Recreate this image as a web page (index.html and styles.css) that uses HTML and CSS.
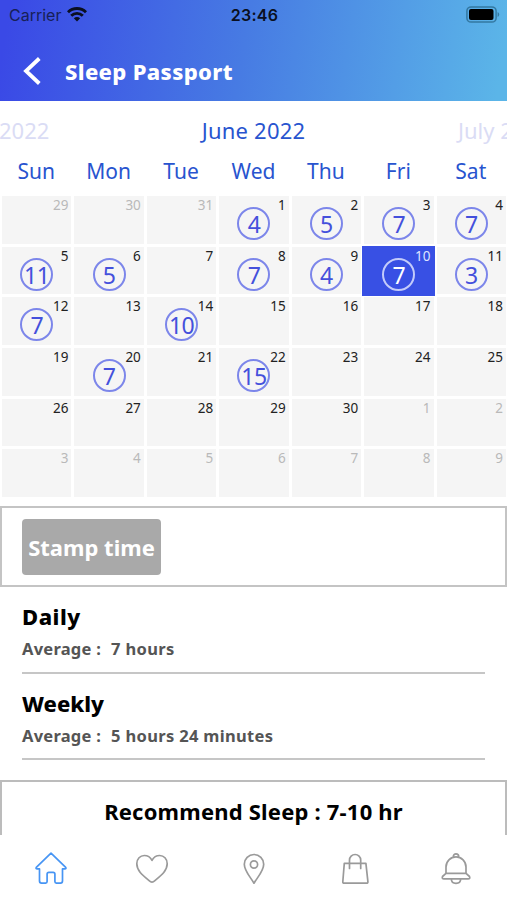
FILE: index.html
```html
<!DOCTYPE html>
<html lang="en">
<head>
<meta charset="utf-8">
<title>Sleep Passport</title>
<link rel="stylesheet" href="styles.css">
</head>
<body>
<div class="app">
  <header class="header">
    <div class="status">
      <div class="carrier"><span>Carrier</span>
        <svg width="20" height="15" viewBox="0 0 20 15" fill="none" stroke="#0a0f20" stroke-width="2.9"><path d="M1 5.2C6 .3 14 .3 19 5.2M4.2 8.800c3.3-3.2 8.3-3.2 11.6 0"/><path d="M6.800 11.200c1.900-1.700 4.500-1.700 6.400 0L10 14.500z" fill="#0a0f20" stroke="none"/></svg>
      </div>
      <time class="clock">23:46</time>
      <svg class="battery" width="34" height="17" viewBox="0 0 34 17"><rect x=".9" y=".9" width="29.2" height="15.2" rx="4.200" fill="none" stroke="#27658a" stroke-opacity=".75" stroke-width="1.5"/><rect x="3" y="3" width="24.5" height="11" rx="2" fill="#000"/><path d="M31.600 6v5q1.600-.7 1.600-2.500T31.600 6" fill="#27658a" fill-opacity=".75"/></svg>
    </div>
    <div class="titlebar">
      <svg width="18" height="28" viewBox="0 0 18 28" fill="none" stroke="#fff" stroke-width="3.800"><path d="M16.300 1.500 3 14l13.300 12.500"/></svg>
      <h1>Sleep Passport</h1>
    </div>
  </header>

  <section class="calendar">
    <div class="months"><span class="prev">2022</span><span class="current">June 2022</span><span class="next">July 2022</span></div>
    <div class="weekdays"><span>Sun</span><span>Mon</span><span>Tue</span><span>Wed</span><span>Thu</span><span>Fri</span><span>Sat</span></div>
    <div class="days">
      <div class="day out"><i>29</i></div><div class="day out"><i>30</i></div><div class="day out"><i>31</i></div><div class="day"><i>1</i><b>4</b></div><div class="day"><i>2</i><b>5</b></div><div class="day"><i>3</i><b>7</b></div><div class="day"><i>4</i><b>7</b></div>
      <div class="day"><i>5</i><b>11</b></div><div class="day"><i>6</i><b>5</b></div><div class="day"><i>7</i></div><div class="day"><i>8</i><b>7</b></div><div class="day"><i>9</i><b>4</b></div><div class="day selected"><i>10</i><b>7</b></div><div class="day"><i>11</i><b>3</b></div>
      <div class="day"><i>12</i><b>7</b></div><div class="day"><i>13</i></div><div class="day"><i>14</i><b>10</b></div><div class="day"><i>15</i></div><div class="day"><i>16</i></div><div class="day"><i>17</i></div><div class="day"><i>18</i></div>
      <div class="day"><i>19</i></div><div class="day"><i>20</i><b>7</b></div><div class="day"><i>21</i></div><div class="day"><i>22</i><b>15</b></div><div class="day"><i>23</i></div><div class="day"><i>24</i></div><div class="day"><i>25</i></div>
      <div class="day"><i>26</i></div><div class="day"><i>27</i></div><div class="day"><i>28</i></div><div class="day"><i>29</i></div><div class="day"><i>30</i></div><div class="day out"><i>1</i></div><div class="day out"><i>2</i></div>
      <div class="day out"><i>3</i></div><div class="day out"><i>4</i></div><div class="day out"><i>5</i></div><div class="day out"><i>6</i></div><div class="day out"><i>7</i></div><div class="day out"><i>8</i></div><div class="day out"><i>9</i></div>
    </div>
  </section>

  <section class="stamp"><button class="stamp-button">Stamp time</button></section>

  <section class="averages">
    <article class="average"><h2 class="daily">Daily</h2><p><span class="label">Average :</span><span class="value">7 hours</span></p></article>
    <article class="average"><h2>Weekly</h2><p><span class="label">Average :</span><span class="value">5 hours 24 minutes</span></p></article>
  </section>

  <section class="recommend"><span>Recommend Sleep : 7-10 hr</span></section>

  <nav class="tabs">
    <svg class="active" viewBox="0 0 34 34"><path d="M17 2.200 2.300 16.400q-.8 1.500.9 1.500h2.300v12.200q0 2 2 2h4.100q1.500 0 1.500-1.600v-7.400q0-1.800 1.800-1.800h4.200q1.800 0 1.800 1.800v7.400q0 1.600 1.500 1.600h4.100q2 0 2-2V17.900h2.300q1.700 0 .9-1.500z"/></svg>
    <svg viewBox="0 0 34 34"><path d="M17 30.200q-1.200 0-3.200-1.900C7 22.700 1.800 18.400 1.800 11.800 1.800 6.700 5.200 3.500 9.300 3.500c3.700 0 6.200 2 7.700 4.900 1.500-2.900 4-4.900 7.700-4.900 4.100 0 7.500 3.200 7.500 8.300 0 6.600-5.200 10.900-12 16.500q-2 1.900-3.200 1.900z"/></svg>
    <svg viewBox="0 0 34 34"><path d="M18 31.200C14.500 25.200 8.300 18.800 8.300 12.200a9.700 9.700 0 0 1 19.400 0c0 6.600-6.200 13-9.700 19z"/><circle cx="18" cy="12.500" r="3.600"/></svg>
    <svg viewBox="0 0 34 34"><path d="M6.300 11.300h21.600l2 18.400q.1 1.500-1.400 1.500H6.200q-1.500 0-1.400-1.500l1.500-18.400zM11.500 16.400V8.100a5.600 5.600 0 0 1 11.200 0v8.300"/></svg>
    <svg viewBox="0 0 34 34"><path d="M14.300 5.300V4.500a2.700 2.700 0 0 1 5.400 0v.8M7 21.300V14.900a10 10 0 0 1 20 0v6.400l3.500 3.200q1 2.300-1.400 2.300H5q-2.400 0-1.500-2.300zM6.700 21.300h20.600M12.300 27c.2 5.800 9.200 5.800 9.400 0"/></svg>
  </nav>
</div>
</body>
</html>
```

FILE: styles.css
```css
* { box-sizing: border-box; }
body { margin: 0; background: #fff; font-family: "Noto Sans", sans-serif; }
h1, h2, p { margin: 0; }
.app { width: 507px; height: 900px; overflow: hidden; display: flex; flex-direction: column; }

.header { flex: none; height: 101px; background: linear-gradient(99deg, #3a49e6 2%, #477be3 48%, #5bb5e8 98%); }
.status { height: 30px; display: grid; grid-template-columns: 1fr auto 1fr; align-items: center; padding: 0 7px 0 9px; font-family: Inter, sans-serif; font-size: 16px; color: #0a0f20; }
.carrier { display: flex; align-items: center; gap: 6px; color: #172057; letter-spacing: 0; }
.carrier svg { margin-top: -2px; }
.clock { font-weight: 600; letter-spacing: .3px; }
.battery { justify-self: end; margin-top: -2px; }
.titlebar { display: flex; align-items: center; height: 82px; padding-left: 23px; gap: 24px; }
h1 { color: #fff; font-size: 22px; font-weight: 800; line-height: 30px; letter-spacing: .35px; }

.calendar { flex: none; height: 405px; }
.months { height: 57px; display: grid; grid-template-columns: 1fr auto 1fr; align-items: center; overflow: hidden; color: #2854cf; font-size: 22px; white-space: nowrap; }
.current { letter-spacing: .2px; }
.prev, .next { color: #dadcf5; }
.prev { margin-left: -1px; }
.next { width: 49px; justify-self: end; }
.weekdays { display: grid; grid-template-columns: repeat(7, 1fr); height: 37px; line-height: 26px; text-align: center; color: #2854cf; font-size: 21px; }
.days { display: grid; grid-template-columns: repeat(7, 1fr); grid-auto-rows: 50.7px; }
.day { display: flex; flex-direction: column; align-items: center; background: #f5f5f5; border: solid #fff; border-width: 1px 1px 2px 2px; color: #222; }
.day i { align-self: flex-end; margin-right: 3px; font-style: normal; font-size: 13.5px; line-height: 19px; height: 11px; }
.day b { width: 33px; height: 33px; border: 2px solid #7c86ea; border-radius: 50%; font-size: 23px; font-weight: 400; line-height: 31px; color: #4450dc; display: flex; flex: none; justify-content: center; letter-spacing: -.5px; }
.out { color: #b9b9b9; }
.selected { background: #3850e4; border-color: #3850e4; color: #dfe4ff; }
.selected b { border-color: #c3cbfa; color: #fff; }

.stamp { flex: none; height: 81px; border: 2px solid #c4c4c4; padding: 11px 20px; }
.stamp-button { display: block; width: 139px; height: 56px; padding: 0; border: 0; border-radius: 4px; background: #a9a9a9; color: #fff; font: 700 22px "Noto Sans", sans-serif; }
.averages { flex: none; height: 193px; padding: 0 22px; }
.average { height: 86.5px; border-bottom: 2px solid #c6c6c6; padding-top: 14px; }
h2 { font-size: 22px; font-weight: 800; line-height: 30px; color: #000; }
.daily { letter-spacing: .5px; }
.average p { display: flex; gap: 10px; margin-top: 5px; font-size: 16.5px; line-height: 26px; font-weight: 700; color: #555; }
.label { letter-spacing: .25px; }
.value { letter-spacing: .33px; }
.recommend { flex: none; height: 55px; border: 2px solid #bcbcbc; border-bottom: 0; text-align: center; font-size: 22px; line-height: 58px; font-weight: 700; color: #000; letter-spacing: .2px; white-space: nowrap; }
.tabs { flex: 1; display: grid; grid-template-columns: repeat(5, 1fr); align-items: center; justify-items: center; padding-bottom: 0; }
.tabs svg { width: 34px; height: 34px; fill: none; stroke: #9a9a9a; stroke-width: 1.7; stroke-linejoin: round; stroke-linecap: round; }
.tabs svg:not(.active) { transform: translateY(1px); }
.tabs .active { stroke: #4795f4; }
```
